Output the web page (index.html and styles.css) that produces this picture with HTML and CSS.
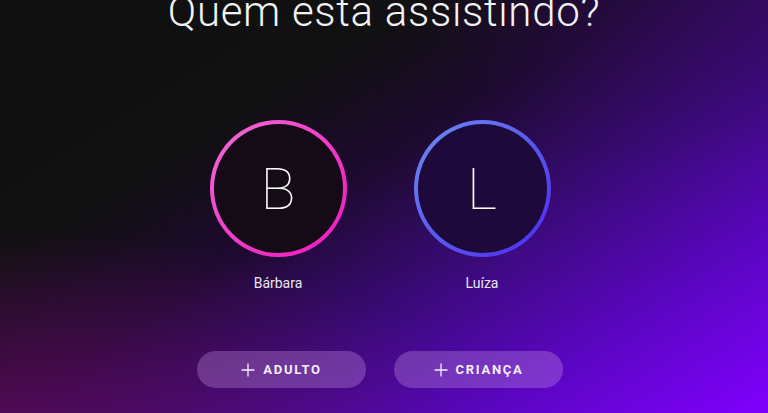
FILE: index.html
```
<!DOCTYPE html>
<html lang="pt-BR">
<head>
<meta charset="utf-8">
<title>Quem está assistindo?</title>
<link rel="stylesheet" href="styles.css">
</head>
<body>
<main class="page">
  <h1 class="title">Quem esta assistindo?</h1>
  <ul class="profiles">
    <li class="profile">
      <div class="avatar avatar-pink"><span class="initial">B</span></div>
      <span class="name">Bárbara</span>
    </li>
    <li class="profile">
      <div class="avatar avatar-blue"><span class="initial">L</span></div>
      <span class="name">Luíza</span>
    </li>
  </ul>
  <div class="actions">
    <button class="add-btn" type="button">
      <svg class="plus" viewBox="0 0 14 14" width="14" height="14"><path d="M7 0.5V13.5M0.5 7H13.5" stroke="currentColor" stroke-width="1.3" fill="none"/></svg>
      <span>ADULTO</span>
    </button>
    <button class="add-btn" type="button">
      <svg class="plus" viewBox="0 0 14 14" width="14" height="14"><path d="M7 0.5V13.5M0.5 7H13.5" stroke="currentColor" stroke-width="1.3" fill="none"/></svg>
      <span>CRIANÇA</span>
    </button>
  </div>
</main>
</body>
</html>
```
FILE: styles.css
```
* { box-sizing: border-box; }
html, body { margin: 0; padding: 0; height: 100%; }
body {
  font-family: "Roboto", "Noto Sans", sans-serif;
  color: #fff;
  overflow: hidden;
  background:
    radial-gradient(ellipse 60% 45% at 0% 100%, rgba(120, 10, 110, 0.55), rgba(120, 10, 110, 0) 100%),
    radial-gradient(ellipse 45% 40% at 100% 0%, rgba(60, 10, 110, 0.45), rgba(60, 10, 110, 0) 100%),
    linear-gradient(148deg, #101010 0%, #111012 30%, #1e0a30 45%, #3a0a78 62%, #5a06c0 80%, #8000ff 100%);
}
.page {
  height: 413px;
  display: flex;
  flex-direction: column;
  align-items: center;
  padding-right: 8px;
}
.title {
  margin: -12px 0 0 8px;
  font-family: "Roboto", sans-serif;
  font-weight: 300;
  font-size: 42px;
  line-height: 48px;
  letter-spacing: 0.7px;
  color: #f2f2f2;
}
.profiles {
  list-style: none;
  margin: 84px 0 0 0;
  padding: 0;
  display: flex;
  gap: 67px;
}
.profile {
  display: flex;
  flex-direction: column;
  align-items: center;
  gap: 18px;
}
.avatar {
  width: 137px;
  height: 137px;
  border-radius: 50%;
  padding: 4px;
  display: flex;
}
.avatar-pink { background: linear-gradient(135deg, #f070d8 0%, #f03cc8 50%, #f018c0 100%); }
.avatar-blue { background: linear-gradient(135deg, #6d8cf4 0%, #5a5af0 50%, #4a28ec 100%); }
.initial {
  flex: 1;
  border-radius: 50%;
  display: flex;
  align-items: center;
  justify-content: center;
  font-family: "Roboto", sans-serif;
  font-weight: 100;
  font-size: 58px;
  color: #fff;
}
.avatar-pink .initial { background: #150b17; }
.avatar-blue .initial { background: #1d0a3a; }
.name {
  font-family: "Roboto", sans-serif;
  font-size: 14px;
  font-weight: 400;
  color: #ece6f2;
}
.actions {
  margin-top: 60px;
  display: flex;
  gap: 28px;
}
.add-btn {
  width: 169px;
  height: 37px;
  border: 0;
  border-radius: 19px;
  background: rgba(200, 150, 230, 0.32);
  color: #f4eefa;
  display: flex;
  align-items: center;
  justify-content: center;
  gap: 8px;
  font-family: "Roboto", sans-serif;
  font-weight: 700;
  font-size: 13px;
  letter-spacing: 1.7px;
  padding: 0;
}
.plus { display: block; }
```
